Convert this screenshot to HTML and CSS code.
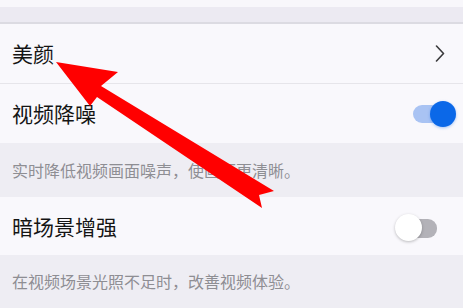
FILE: index.html
```html
<!DOCTYPE html>
<html lang="zh">
<head>
<meta charset="utf-8">
<link rel="stylesheet" href="styles.css">
</head>
<body>
<div class="page">
  <div class="top"></div>
  <div class="gap"></div>
  <div class="group">
    <div class="row sep">
      <span class="label">美颜</span>
      <svg class="chev" width="10" height="17" viewBox="0 0 10 17"><path d="M1.5 1 L8.5 8.5 L1.5 16" fill="none" stroke="#3a3a3c" stroke-width="1.6" stroke-linecap="round" stroke-linejoin="round"/></svg>
    </div>
    <div class="row">
      <span class="label">视频降噪</span>
      <span class="toggle on"><span class="knob"></span></span>
    </div>
  </div>
  <div class="desc d1">实时降低视频画面噪声，使画面更清晰。</div>
  <div class="group">
    <div class="row r3">
      <span class="label">暗场景增强</span>
      <span class="toggle off"><span class="knob"></span></span>
    </div>
  </div>
  <div class="desc d2">在视频场景光照不足时，改善视频体验。</div>
  <svg class="arrow" width="463" height="308" viewBox="0 0 463 308">
    <polygon points="56,62 118,72 101,86 274,191 259,195 262,208 97,97 90,106" fill="#ff0000"/>
  </svg>
</div>
</body>
</html>
```
FILE: styles.css
```css
html, body {
  margin: 0;
  padding: 0;
}
body {
  background: #eeedf3;
  font-family: "Noto Sans CJK SC", "Noto Sans", sans-serif;
}
.page {
  position: relative;
  width: 463px;
  height: 308px;
  overflow: hidden;
  background: #eeedf3;
}
.top {
  height: 7px;
  background: #f8f7fb;
}
.gap {
  height: 15px;
  background: #eceaf2;
  border-bottom: 2px solid #dcdbe2;
}
.group {
  background: #f9f8fc;
}
.row {
  height: 59px;
  display: flex;
  align-items: center;
  justify-content: space-between;
  padding: 0 17px 0 12px;
}
.row.sep {
  border-bottom: 1px solid #e6e5ea;
}
.row.r3 {
  height: 58px;
}
.label {
  font-size: 21px;
  color: #141414;
  line-height: 1;
}
.chev {
  margin-right: 1px;
}
.desc {
  font-size: 16px;
  color: #8e8e93;
  padding: 0 12px;
  line-height: 1;
}
.d1 {
  height: 54px;
  display: flex;
  align-items: center;
}
.d2 {
  padding-top: 18px;
}
.toggle {
  position: relative;
  width: 35px;
  height: 18px;
  border-radius: 9px;
}
.toggle.on {
  background: #a9c3f3;
  margin-right: -2px;
}
.toggle.off {
  background: #b3b2b8;
  width: 32px;
  height: 19px;
  margin-right: 9px;
  margin-top: 4px;
}
.knob {
  position: absolute;
  top: 50%;
  border-radius: 50%;
}
.on .knob {
  width: 26px;
  height: 26px;
  right: -8px;
  margin-top: -13px;
  background: #0b68e8;
  box-shadow: 0 1px 3px rgba(11, 104, 232, 0.35);
}
.off .knob {
  width: 27px;
  height: 27px;
  left: -10px;
  margin-top: -14px;
  background: #ffffff;
  box-shadow: 0 1px 3px rgba(0, 0, 0, 0.25);
}
.arrow {
  position: absolute;
  left: 0;
  top: 0;
}
```
